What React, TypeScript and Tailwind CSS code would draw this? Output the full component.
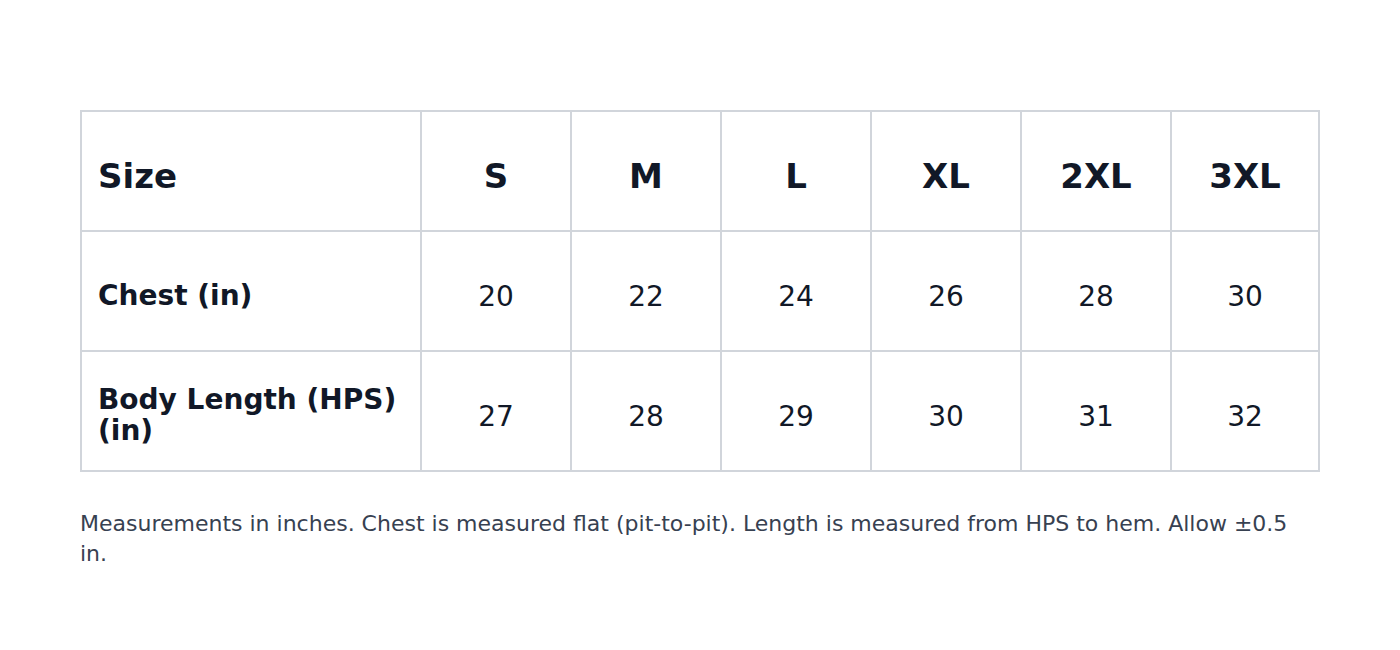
import React from "react";

const sizes = ["S", "M", "L", "XL", "2XL", "3XL"];
const rows: { label: string; values: number[] }[] = [
  { label: "Chest (in)", values: [20, 22, 24, 26, 28, 30] },
  { label: "Body Length (HPS) (in)", values: [27, 28, 29, 30, 31, 32] },
];

export default function App() {
  return (
    <div
      className="min-h-[650px] bg-white px-20 pt-[110px] text-[#111827]"
      style={{ fontFamily: '"DejaVu Sans", sans-serif' }}
    >
      <table className="w-[1240px] table-fixed border-collapse">
        <colgroup>
          <col className="w-[340px]" />
          <col className="w-[150px]" />
          <col className="w-[150px]" />
          <col className="w-[150px]" />
          <col className="w-[150px]" />
          <col className="w-[150px]" />
          <col />
        </colgroup>
        <thead>
          <tr className="h-[120px]">
            <th className="border-2 border-[#d1d5db] px-4 pt-[10px] text-left align-middle text-[34px] font-bold">
              Size
            </th>
            {sizes.map((s) => (
              <th
                key={s}
                className="border-2 border-[#d1d5db] pt-[10px] text-center align-middle text-[34px] font-bold"
              >
                {s}
              </th>
            ))}
          </tr>
        </thead>
        <tbody>
          {rows.map((r) => (
            <tr key={r.label} className="h-[120px]">
              <th className="border-2 border-[#d1d5db] px-4 pt-[10px] text-left align-middle text-[28px] font-bold leading-[1.1]">
                {r.label}
              </th>
              {r.values.map((v, i) => (
                <td
                  key={i}
                  className="border-2 border-[#d1d5db] pt-[12px] text-center align-middle text-[28px] font-normal"
                >
                  {v}
                </td>
              ))}
            </tr>
          ))}
        </tbody>
      </table>
      <p className="mt-[37px] w-[1240px] text-[22px] leading-[30px] text-[#374151]">
        Measurements in inches. Chest is measured flat (pit-to-pit). Length is
        measured from HPS to hem. Allow ±0.5 in.
      </p>
    </div>
  );
}
